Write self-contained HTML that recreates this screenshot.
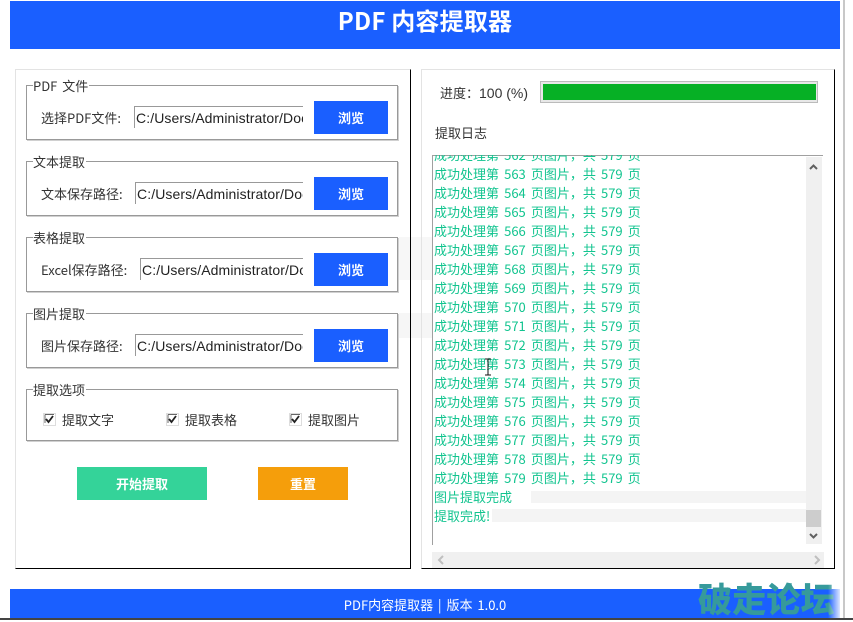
<!DOCTYPE html>
<html lang="zh"><head><meta charset="utf-8"><title>PDF 内容提取器</title>
<style>
html,body{margin:0;padding:0;background:#fff}
body{position:relative;width:853px;height:620px;overflow:hidden;font-family:"Liberation Sans","Noto Sans CJK SC",sans-serif;color:#333;font-size:13px}
.a{position:absolute;white-space:nowrap}
.cjk{font-family:"Noto Sans CJK SC","Liberation Sans",sans-serif}
.panel{position:absolute;box-sizing:border-box;border-top:1px solid #e3e3e3;border-left:1px solid #e3e3e3;border-right:1px solid #000;border-bottom:1px solid #000;background:#fff}
.gb{position:absolute;left:26px;width:372px;box-sizing:border-box;border:1px solid #999;box-shadow:1px 1px 0 #d0d0d0}
.lg{position:absolute;left:33px;background:#fff;line-height:16px;height:16px;padding-right:1px;font-family:"Noto Sans CJK SC",sans-serif}
.lb{position:absolute;left:41px;line-height:18px;height:18px;white-space:nowrap;font-family:"Noto Sans CJK SC",sans-serif}
.in{position:absolute;height:22px;line-height:22px;box-sizing:border-box;border-top:1px solid #999;border-left:1px solid #999;overflow:hidden;color:#222;white-space:nowrap;padding-left:1px;font-family:"Liberation Sans",sans-serif;font-size:14px;letter-spacing:.1px}
.btn{position:absolute;left:314px;width:74px;height:33px;background:#1a5fff;color:#fff;text-align:center;line-height:33px;font-family:"Noto Sans CJK SC",sans-serif;font-weight:700}
.log{position:absolute;color:#12c48f;line-height:19px;height:19px;white-space:nowrap;font-family:"Noto Sans CJK SC",sans-serif;font-size:13px;word-spacing:2.2px}
</style></head><body>
<div class="a" style="left:10px;top:1px;width:830px;height:48px;background:#1a5fff"></div>
<div class="a cjk" style="left:10px;top:1px;width:830px;height:38px;line-height:38px;text-align:center;color:#fff;font-size:24px;font-weight:700;letter-spacing:.2px">PDF 内容提取器</div>
<div class="a" style="left:843px;top:0;width:2px;height:620px;background:#c8c8c8"></div>

<div class="a" style="left:399px;top:237px;width:34px;height:43px;background:#f7f7f7"></div>
<div class="a" style="left:399px;top:313px;width:34px;height:25px;background:#f6f6f6"></div>

<div class="panel" style="left:15px;top:69px;width:396px;height:500px;background:transparent"></div>
<div class="panel" style="left:421px;top:69px;width:414px;height:500px;background:transparent"></div>

<div class="gb" style="top:85px;height:55px"></div><div class="lg" style="top:78px;word-spacing:2px">PDF 文件</div>
<div class="lb" style="top:109px">选择PDF文件:</div>
<div class="in" style="left:134px;top:106px;width:169px">C:/Users/Administrator/Documents</div>
<div class="btn" style="top:101px">浏览</div>

<div class="gb" style="top:161px;height:55px"></div><div class="lg" style="top:154px">文本提取</div>
<div class="lb" style="top:185px">文本保存路径:</div>
<div class="in" style="left:135px;top:182px;width:168px">C:/Users/Administrator/Documents</div>
<div class="btn" style="top:177px">浏览</div>

<div class="gb" style="top:237px;height:55px;background:#fff"></div><div class="lg" style="top:230px">表格提取</div>
<div class="lb" style="top:261px">Excel保存路径:</div>
<div class="in" style="left:140px;top:258px;width:163px">C:/Users/Administrator/Documents</div>
<div class="btn" style="top:253px">浏览</div>

<div class="gb" style="top:313px;height:55px;background:#fff"></div><div class="lg" style="top:306px">图片提取</div>
<div class="lb" style="top:337px">图片保存路径:</div>
<div class="in" style="left:135px;top:334px;width:168px">C:/Users/Administrator/Documents</div>
<div class="btn" style="top:329px">浏览</div>

<div class="gb" style="top:389px;height:52px"></div><div class="lg" style="top:382px">提取选项</div>
<svg class="a" style="left:43px;top:413px" width="13" height="13" viewBox="0 0 13 13"><rect x=".5" y=".5" width="12" height="12" fill="#fff" stroke="#ddd"/><path d="M2 1.5H11M2 1.5V10" stroke="#666" fill="none"/><path d="M3 6l2.5 3L10 3" stroke="#222" stroke-width="1.8" fill="none"/></svg>
<div class="lb" style="left:62px;top:411px">提取文字</div>
<svg class="a" style="left:166px;top:413px" width="13" height="13" viewBox="0 0 13 13"><rect x=".5" y=".5" width="12" height="12" fill="#fff" stroke="#ddd"/><path d="M2 1.5H11M2 1.5V10" stroke="#666" fill="none"/><path d="M3 6l2.5 3L10 3" stroke="#222" stroke-width="1.8" fill="none"/></svg>
<div class="lb" style="left:185px;top:411px">提取表格</div>
<svg class="a" style="left:289px;top:413px" width="13" height="13" viewBox="0 0 13 13"><rect x=".5" y=".5" width="12" height="12" fill="#fff" stroke="#ddd"/><path d="M2 1.5H11M2 1.5V10" stroke="#666" fill="none"/><path d="M3 6l2.5 3L10 3" stroke="#222" stroke-width="1.8" fill="none"/></svg>
<div class="lb" style="left:308px;top:411px">提取图片</div>

<div class="a cjk" style="left:77px;top:467px;width:130px;height:33px;line-height:33px;background:#34d399;color:#fff;text-align:center;font-weight:700">开始提取</div>
<div class="a cjk" style="left:258px;top:467px;width:90px;height:33px;line-height:33px;background:#f59e0b;color:#fff;text-align:center;font-weight:700">重置</div>

<div class="a cjk" style="left:440px;top:84px;line-height:18px">进度：<span style="font-family:'Liberation Sans',sans-serif;font-size:14px">100 (%)</span></div>
<div class="a" style="left:540px;top:81px;width:278px;height:22px;box-sizing:border-box;border:1px solid #bbb;background:#e8e8e8"></div>
<div class="a" style="left:543px;top:84px;width:273px;height:16px;background:#06b025"></div>
<div class="a cjk" style="left:435px;top:124px;line-height:18px">提取日志</div>

<div class="a" style="left:432px;top:155px;width:391px;height:390px;overflow:hidden;background:#fff">
<div class="a" style="left:0;top:0;width:391px;height:1px;background:#a0a0a0"></div>
<div class="a" style="left:0;top:0;width:1px;height:390px;background:#a0a0a0"></div>
<div class="log" style="left:2px;top:-10px">成功处理第 562 页图片，共 579 页</div>
<div class="log" style="left:2px;top:9px">成功处理第 563 页图片，共 579 页</div>
<div class="log" style="left:2px;top:28px">成功处理第 564 页图片，共 579 页</div>
<div class="log" style="left:2px;top:47px">成功处理第 565 页图片，共 579 页</div>
<div class="log" style="left:2px;top:66px">成功处理第 566 页图片，共 579 页</div>
<div class="log" style="left:2px;top:85px">成功处理第 567 页图片，共 579 页</div>
<div class="log" style="left:2px;top:104px">成功处理第 568 页图片，共 579 页</div>
<div class="log" style="left:2px;top:123px">成功处理第 569 页图片，共 579 页</div>
<div class="log" style="left:2px;top:142px">成功处理第 570 页图片，共 579 页</div>
<div class="log" style="left:2px;top:161px">成功处理第 571 页图片，共 579 页</div>
<div class="log" style="left:2px;top:180px">成功处理第 572 页图片，共 579 页</div>
<div class="log" style="left:2px;top:199px">成功处理第 573 页图片，共 579 页</div>
<div class="log" style="left:2px;top:218px">成功处理第 574 页图片，共 579 页</div>
<div class="log" style="left:2px;top:237px">成功处理第 575 页图片，共 579 页</div>
<div class="log" style="left:2px;top:256px">成功处理第 576 页图片，共 579 页</div>
<div class="log" style="left:2px;top:275px">成功处理第 577 页图片，共 579 页</div>
<div class="log" style="left:2px;top:294px">成功处理第 578 页图片，共 579 页</div>
<div class="log" style="left:2px;top:313px">成功处理第 579 页图片，共 579 页</div>
<div class="a" style="left:99px;top:336px;width:275px;height:12px;background:#f4f4f4"></div>
<div class="a" style="left:60px;top:354px;width:314px;height:13px;background:#f4f4f4"></div>
<div class="log" style="left:2px;top:332px">图片提取完成</div>
<div class="log" style="left:2px;top:351px">提取完成!</div>
</div>

<div class="a" style="left:806px;top:157px;width:16px;height:387px;background:#f0f0f0"></div>
<div class="a" style="left:806px;top:510px;width:15px;height:17px;background:#cdcdcd"></div>
<svg class="a" style="left:806px;top:157px" width="16" height="387" viewBox="0 0 16 387"><path d="M4 12l3.5-3.5L11 12" stroke="#606060" stroke-width="2" fill="none"/><path d="M4 377l3.5 3.5L11 377" stroke="#606060" stroke-width="2" fill="none"/></svg>
<div class="a" style="left:432px;top:552px;width:392px;height:16px;background:#f0f0f0"></div>
<svg class="a" style="left:432px;top:552px" width="392" height="16" viewBox="0 0 392 16"><path d="M11 4L7 8l4 4" stroke="#bfbfbf" stroke-width="2" fill="none"/><path d="M383 4l4 4-4 4" stroke="#bfbfbf" stroke-width="2" fill="none"/></svg>

<svg class="a" style="left:484px;top:358px" width="8" height="18" viewBox="0 0 8 18"><path d="M1 1h6M4 1v16M1 17h6" stroke="#111" fill="none"/></svg>

<div class="a" style="left:10px;top:589px;width:830px;height:29px;background:#1a5fff"></div>
<div class="a cjk" style="left:10px;top:596px;width:830px;line-height:18px;text-align:center;color:#fff;font-size:13px;word-spacing:2px">PDF内容提取器 | 版本 1.0.0</div>
<div class="a" style="left:0;top:618px;width:853px;height:2px;background:#444"></div>
<div class="a cjk" style="left:698px;top:578px;width:145px;line-height:40px;font-size:34px;font-weight:900;color:#369a9b;letter-spacing:.2px">破走论坛</div>
<div class="a" style="left:828px;top:582px;width:14px;height:36px;background:linear-gradient(90deg,rgba(255,255,255,0),#fff)"></div>
</body></html>
